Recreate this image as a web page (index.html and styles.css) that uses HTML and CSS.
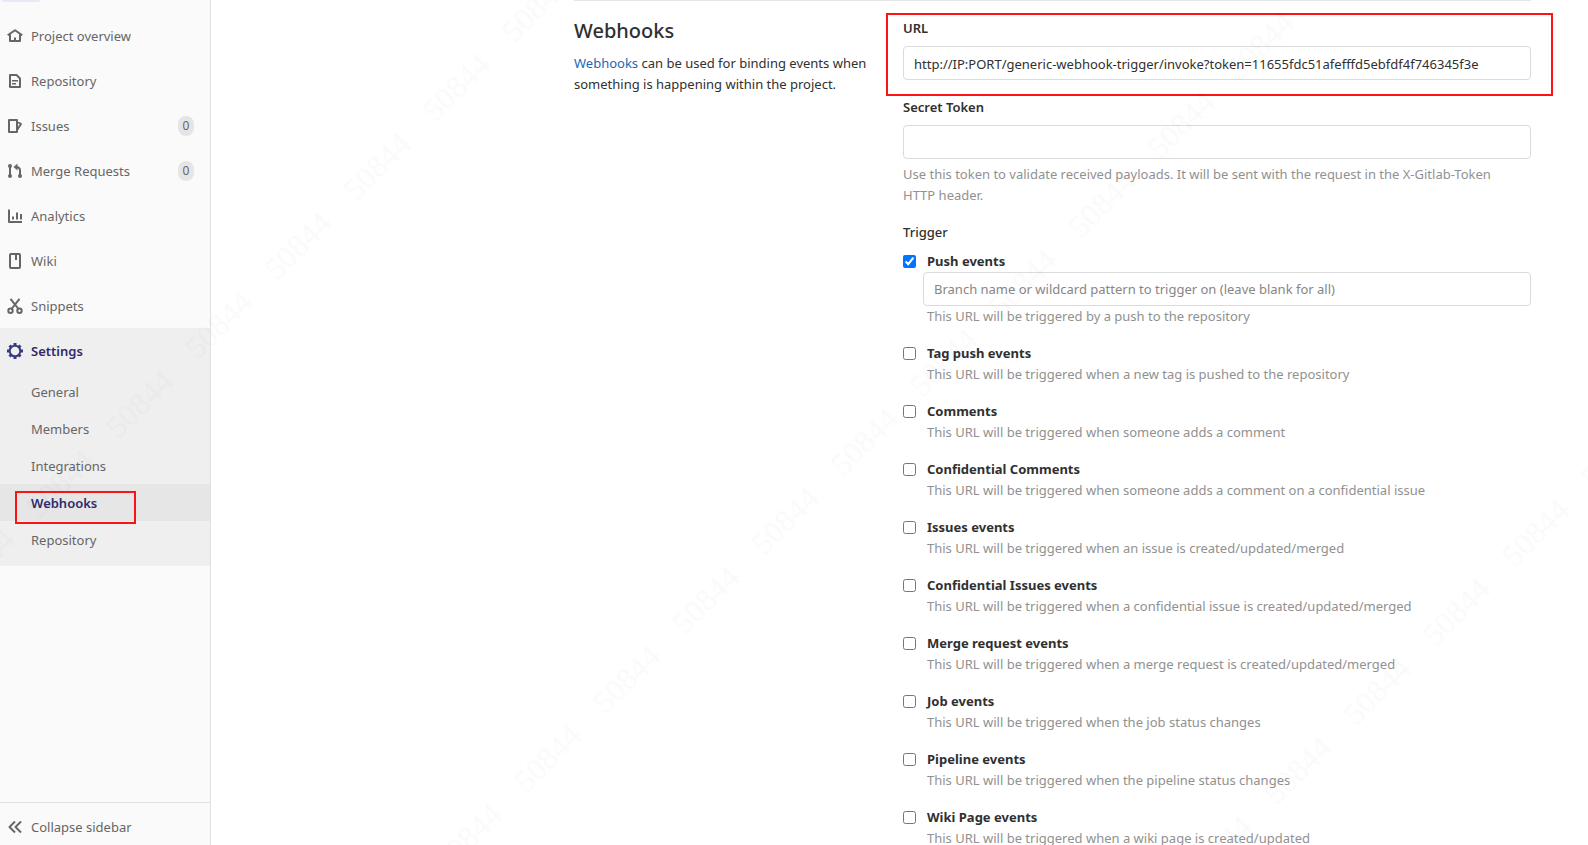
FILE: index.html
```html
<!DOCTYPE html>
<html lang="en">
<head>
  <meta charset="UTF-8" />
  <meta name="viewport" content="width=device-width, initial-scale=1" />
  <title>Webhooks Settings</title>
  <link rel="stylesheet" href="styles.css">
</head>
<body>
  <div class="page">
    <nav class="sidebar">
      <div class="project-avatar"></div>
      <ul class="nav-list">
        <li>
          <a href="#" class="nav-link">
            <svg class="icon" viewBox="0 0 16 16"><path d="M.7 7.300 8 2.200l7.300 5.100M3 6.500V13h10V6.500" /><path d="M8 9.500V13" /></svg>
            <span>Project overview</span>
          </a>
        </li>
        <li>
          <a href="#" class="nav-link">
            <svg class="icon" viewBox="0 0 16 16"><path d="M3 2h6.500L13 5.500V14H3z" /><path d="M5 7.700h6M5 10.700h4" class="thin" /></svg>
            <span>Repository</span>
          </a>
        </li>
        <li>
          <a href="#" class="nav-link">
            <svg class="icon" viewBox="0 0 16 16"><path d="M2 2h8v12H2zM10 3.500l4 2.500-4 6" /></svg>
            <span>Issues</span>
            <span class="badge">0</span>
          </a>
        </li>
        <li>
          <a href="#" class="nav-link">
            <svg class="icon" viewBox="0 0 16 16"><path d="M3 3v10M13 13V7.500Q13 4 9 4" /><g class="solid"><circle cx="3" cy="3" r="2" /><circle cx="3" cy="13" r="2" /><circle cx="13" cy="13" r="2" /><path d="M10.500.5v7L6.500 4z" /></g></svg>
            <span>Merge Requests</span>
            <span class="badge">0</span>
          </a>
        </li>
        <li>
          <a href="#" class="nav-link">
            <svg class="icon" viewBox="0 0 16 16"><path d="M2 1.500V14h13M6 8.500v3M10 4.500v7M14 6v5.500" /></svg>
            <span>Analytics</span>
          </a>
        </li>
        <li>
          <a href="#" class="nav-link">
            <svg class="icon" viewBox="0 0 16 16"><rect x="3" y="1" width="10" height="14" rx="1" /><path d="M9 1v6" /></svg>
            <span>Wiki</span>
          </a>
        </li>
        <li>
          <a href="#" class="nav-link">
            <svg class="icon" viewBox="0 0 16 16"><circle cx="3.500" cy="12.800" r="2.200" /><circle cx="12.500" cy="12.800" r="2.200" /><path d="M3.500.8 11.500 11M12.500.8 4.500 11" /></svg>
            <span>Snippets</span>
          </a>
        </li>
        <li class="active">
          <a href="#" class="nav-link">
            <svg class="icon" viewBox="0 0 16 16"><circle cx="8" cy="8" r="5.300" /><path class="teeth" d="M8 0v3M8 13v3M0 8h3M13 8h3M2.500 2.500l2 2M11.500 11.500l2 2M2.500 13.500l2-2M11.500 4.500l2-2" /></svg>
            <span>Settings</span>
          </a>
          <ul class="sub-list">
            <li><a href="#">General</a></li>
            <li><a href="#">Members</a></li>
            <li><a href="#">Integrations</a></li>
            <li class="current"><a href="#">Webhooks</a></li>
            <li><a href="#">Repository</a></li>
          </ul>
        </li>
      </ul>
      <button type="button" class="collapse-btn">
        <svg class="icon" viewBox="0 0 16 16"><path d="M8 2.500 2.500 8 8 13.500M14 2.500 8.500 8l5.500 5.500" /></svg>
        <span>Collapse sidebar</span>
      </button>
    </nav>

    <main class="content">
      <div class="settings-row">
        <section class="intro">
          <h4>Webhooks</h4>
          <p><a href="#">Webhooks</a> can be used for binding events when something is happening within the project.</p>
        </section>

        <form class="hook-form">
          <div class="form-group marked">
            <label for="hook-url">URL</label>
            <input type="text" id="hook-url" class="form-control" value="http://IP:PORT/generic-webhook-trigger/invoke?token=11655fdc51afefffd5ebfdf4f746345f3e">
          </div>
          <div class="form-group">
            <label for="hook-token">Secret Token</label>
            <input type="text" id="hook-token" class="form-control">
            <p class="help-text">Use this token to validate received payloads. It will be sent with the request in the X-Gitlab-Token HTTP header.</p>
          </div>

          <div class="trigger-title">Trigger</div>
          <div class="event">
            <input type="checkbox" id="push" checked>
            <label for="push">Push events</label>
            <input type="text" class="form-control branch" aria-label="Branch filter" placeholder="Branch name or wildcard pattern to trigger on (leave blank for all)">
            <p>This URL will be triggered by a push to the repository</p>
          </div>
          <div class="event">
            <input type="checkbox" id="tag-push">
            <label for="tag-push">Tag push events</label>
            <p>This URL will be triggered when a new tag is pushed to the repository</p>
          </div>
          <div class="event">
            <input type="checkbox" id="comments">
            <label for="comments">Comments</label>
            <p>This URL will be triggered when someone adds a comment</p>
          </div>
          <div class="event">
            <input type="checkbox" id="conf-comments">
            <label for="conf-comments">Confidential Comments</label>
            <p>This URL will be triggered when someone adds a comment on a confidential issue</p>
          </div>
          <div class="event">
            <input type="checkbox" id="issues">
            <label for="issues">Issues events</label>
            <p>This URL will be triggered when an issue is created/updated/merged</p>
          </div>
          <div class="event">
            <input type="checkbox" id="conf-issues">
            <label for="conf-issues">Confidential Issues events</label>
            <p>This URL will be triggered when a confidential issue is created/updated/merged</p>
          </div>
          <div class="event">
            <input type="checkbox" id="merge">
            <label for="merge">Merge request events</label>
            <p>This URL will be triggered when a merge request is created/updated/merged</p>
          </div>
          <div class="event">
            <input type="checkbox" id="job">
            <label for="job">Job events</label>
            <p>This URL will be triggered when the job status changes</p>
          </div>
          <div class="event">
            <input type="checkbox" id="pipeline">
            <label for="pipeline">Pipeline events</label>
            <p>This URL will be triggered when the pipeline status changes</p>
          </div>
          <div class="event">
            <input type="checkbox" id="wiki">
            <label for="wiki">Wiki Page events</label>
            <p>This URL will be triggered when a wiki page is created/updated</p>
          </div>
        </form>
      </div>
    </main>
  </div>

  <!-- user id watermark -->
  <svg class="watermark" aria-hidden="true">
    <defs>
      <pattern id="mark-a" x="-19" y="0" width="112" height="1078" patternUnits="userSpaceOnUse" patternTransform="rotate(-45)">
        <text x="56" y="395" text-anchor="middle">50844</text>
      </pattern>
      <pattern id="mark-b" x="19" y="0" width="112" height="1078" patternUnits="userSpaceOnUse" patternTransform="rotate(-45)">
        <text x="56" y="934" text-anchor="middle">50844</text>
      </pattern>
    </defs>
    <rect width="100%" height="100%" fill="url(#mark-a)" />
    <rect width="100%" height="100%" fill="url(#mark-b)" />
  </svg>
</body>
</html>
```
FILE: styles.css
```css
*, *::after {
  box-sizing: border-box;
}
body {
  margin: 0;
  font-family: "Noto Sans", "Open Sans", sans-serif;
  font-size: 13px;
  line-height: 21px;
  color: #303030;
  background-color: #fff;
}
h4, p, ul {
  margin: 0;
  padding: 0;
}
ul {
  list-style: none;
}
a {
  text-decoration: none;
}
.page {
  display: flex;
  height: 100vh;
  overflow: hidden;
}

/* Sidebar */
.sidebar {
  flex: 0 0 211px;
  display: flex;
  flex-direction: column;
  background-color: #fafafa;
  border-right: 1px solid #e1e1e1;
}
.project-avatar {
  width: 38px;
  height: 2px;
  margin: 0 0 11px 2px;
  background-color: #e8e8f7;
  border-radius: 0 0 2px 2px;
}
.nav-list {
  flex: 1;
}
.nav-link {
  display: flex;
  align-items: center;
  gap: 8px;
  height: 45px;
  padding: 1px 16px 0 7px;
  color: #666;
}
.icon {
  width: 16px;
  height: 16px;
  flex: none;
  fill: none;
  stroke: currentColor;
  stroke-width: 2;
  stroke-linejoin: round;
}
.icon .thin {
  stroke-width: 1.5;
}
.icon .solid {
  fill: currentColor;
  stroke: none;
}
.icon .teeth {
  stroke-width: 3;
}
.badge {
  margin-left: auto;
  width: 16px;
  border-radius: 8px;
  background-color: #e5e5e5;
  font-size: 12px;
  line-height: 20px;
  text-align: center;
}
.active {
  padding-bottom: 8px;
  background-color: #efefef;
}
.active .nav-link {
  color: #2f2a6b;
  font-weight: 600;
}
.active .icon {
  color: #393982;
}
.sub-list a {
  display: block;
  padding: 9px 16px 7px 31px;
  color: #666;
}
.sub-list .current {
  position: relative;
  background-color: #e6e6e6;
}
.sub-list .current a {
  color: #2f2a6b;
  font-weight: 600;
}
.sub-list .current::after {
  content: "";
  position: absolute;
  top: 7px;
  left: 15px;
  width: 121px;
  height: 33px;
  border: 2px solid #fb1414;
}
.collapse-btn {
  display: flex;
  align-items: center;
  gap: 8px;
  height: 43px;
  padding: 6px 7px 0;
  border: 0;
  border-top: 1px solid #e1e1e1;
  background: none;
  color: #666;
  font: inherit;
}

/* Main area */
.content {
  flex: 1;
  padding: 0 57px 0 32px;
}
.settings-row {
  display: grid;
  grid-template-columns: 299fr 628fr;
  gap: 30px;
  max-width: 957px;
  margin-left: auto;
  border-top: 1px solid #e5e5e5;
}
.intro {
  padding-top: 16px;
}
.intro h4 {
  margin-bottom: 9px;
  font-size: 20px;
  line-height: 27px;
  font-weight: 500;
}
.intro a {
  color: #1b69b6;
}
.hook-form {
  padding-top: 17px;
}
.form-group {
  margin-bottom: 16px;
}
.form-group label {
  display: block;
  margin-bottom: 7px;
  font-weight: 600;
}
.marked {
  position: relative;
  margin-bottom: 17px;
}
.marked::after {
  content: "";
  position: absolute;
  inset: -5px -22px -16px -17px;
  border: 2px solid #fb1414;
  pointer-events: none;
}
.form-control {
  display: block;
  width: 100%;
  height: 34px;
  padding: 7px 10px 5px;
  border: 1px solid #dbdbdb;
  border-radius: 4px;
  background-color: #fff;
  color: #303030;
  font: inherit;
}
.form-control::placeholder {
  color: #868686;
}
.help-text {
  margin-top: 5px;
  padding-right: 16px;
  color: #919191;
}
.trigger-title {
  margin-bottom: 8px;
  font-weight: 500;
}
.event {
  display: grid;
  grid-template-columns: 13px 1fr;
  column-gap: 11px;
  align-items: center;
  margin-bottom: 16px;
}
.event input[type="checkbox"] {
  width: 13px;
  height: 13px;
  margin: 0;
}
.event label {
  font-weight: 700;
}
.event p {
  grid-column: 2;
  color: #919191;
}
.event .branch {
  grid-column: 2;
  width: auto;
  padding: 6px 10px;
  margin-left: -4px;
}

.watermark {
  position: fixed;
  inset: 0;
  width: 100%;
  height: 100%;
  pointer-events: none;
}
.watermark text {
  font-family: "Liberation Serif", serif;
  font-size: 32px;
  fill: #000;
  fill-opacity: 0.02;
}
```
